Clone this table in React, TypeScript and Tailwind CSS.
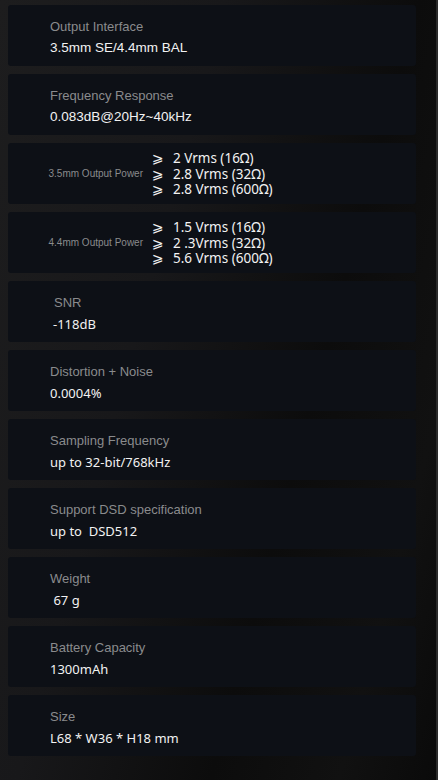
const specs: { label: string; value: string; arial?: boolean; shift?: boolean }[] = [
  { label: "Output Interface", value: "3.5mm SE/4.4mm BAL", arial: true },
  { label: "Frequency Response", value: "0.083dB@20Hz~40kHz", arial: true },
];

const rest: { label: string; value: string; shift?: boolean }[] = [
  { label: "SNR", value: "-118dB", shift: true },
  { label: "Distortion + Noise", value: "0.0004%" },
  { label: "Sampling Frequency", value: "up to 32-bit/768kHz" },
  { label: "Support DSD specification", value: "up to  DSD512" },
  { label: "Weight", value: "\u00a067 g" },
  { label: "Battery Capacity", value: "1300mAh" },
  { label: "Size", value: "L68 * W36 * H18 mm" },
];

const power = [
  { label: "3.5mm Output Power", lines: ["2 Vrms (16Ω)", "2.8 Vrms (32Ω)", "2.8 Vrms (600Ω)"] },
  { label: "4.4mm Output Power", lines: ["1.5 Vrms (16Ω)", "2 .3Vrms (32Ω)", "5.6 Vrms (600Ω)"] },
];

const arial = "font-['Liberation_Sans',Arial,sans-serif]";
const noto = "font-['Noto_Sans','DejaVu_Sans',sans-serif]";

function SpecCard({ label, value, arial: isArial, shift }: { label: string; value: string; arial?: boolean; shift?: boolean }) {
  return (
    <div className="h-[61px] rounded-[3px] bg-[#0d1016] pl-[42px] pt-[12px]">
      <div className={`${arial} text-[13px] leading-[20px] text-[#8a8b8d] ${shift ? "pl-[4px]" : ""}`}>{label}</div>
      <div
        className={`${isArial ? `${arial} text-[13.5px]` : `${noto} text-[13px]`} leading-[22px] whitespace-pre text-[#f2f2f2] ${shift ? "pl-[3px]" : ""}`}
      >
        {value}
      </div>
    </div>
  );
}

function PowerCard({ label, lines }: { label: string; lines: string[] }) {
  return (
    <div className="flex h-[61px] items-center rounded-[3px] bg-[#0d1016]">
      <div className={`${arial} w-[135px] text-right text-[10px] leading-[14px] text-[#8a8b8d]`}>{label}</div>
      <div className="ml-[9px] flex flex-col gap-[1px] py-[1px]">
        {lines.map((l) => (
          <div key={l} className="flex h-[14.5px] items-center text-[#f2f2f2]">
            <span className="w-[21px] font-['DejaVu_Sans',sans-serif] text-[14px] leading-[14px]">⩾</span>
            <span className={`${noto} text-[13.5px] leading-[14px]`}>{l}</span>
          </div>
        ))}
      </div>
    </div>
  );
}

export default function App() {
  return (
    <div className="min-h-[780px] w-[438px] border-r-2 border-[#2a2a2a] bg-[linear-gradient(105deg,#1d1d1e_0%,#18181a_35%,#0c0c0c_65%,#111111_85%,#0a0a0a_100%)] pl-[8px] pr-[20px] pt-[5px] pb-[24px]">
      <div className="flex flex-col gap-[8px]">
        {specs.map((s) => (
          <SpecCard key={s.label} {...s} />
        ))}
        {power.map((p) => (
          <PowerCard key={p.label} {...p} />
        ))}
        {rest.map((s) => (
          <SpecCard key={s.label} {...s} />
        ))}
      </div>
    </div>
  );
}
